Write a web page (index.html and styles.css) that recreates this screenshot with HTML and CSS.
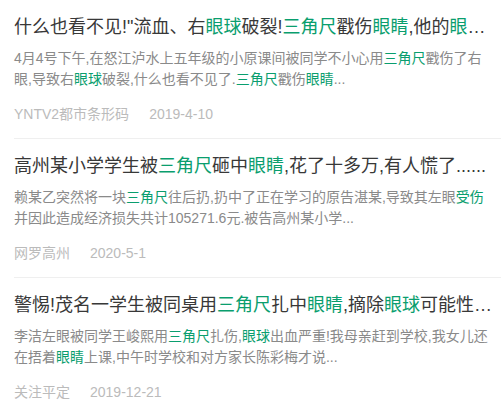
FILE: index.html
```html
<!DOCTYPE html>
<html lang="zh-CN">
<head>
<meta charset="utf-8">
<link rel="stylesheet" href="styles.css">
</head>
<body>
<ul class="list">
  <li class="item">
    <h3 class="title">什么也看不见!"流血、右<em>眼球</em>破裂!<em>三角尺</em>戳伤<em>眼睛</em>,他的<em>眼</em>…</h3>
    <p class="snippet">4月4号下午,在怒江泸水上五年级的小原课间被同学不小心用<em>三角尺</em>戳伤了右眼,导致右<em>眼球</em>破裂,什么也看不见了.<em>三角尺</em>戳伤<em>眼睛</em>...</p>
    <div class="meta"><span>YNTV2都市条形码</span><span>2019-4-10</span></div>
  </li>
  <li class="item">
    <h3 class="title">高州某小学学生被<em>三角尺</em>砸中<em>眼睛</em>,花了十多万,有人慌了......</h3>
    <p class="snippet">赖某乙突然将一块<em>三角尺</em>往后扔,扔中了正在学习的原告湛某,导致其左眼<em>受伤</em>并因此造成经济损失共计105271.6元.被告高州某小学...</p>
    <div class="meta"><span>网罗高州</span><span>2020-5-1</span></div>
  </li>
  <li class="item">
    <h3 class="title">警惕!茂名一学生被同桌用<em>三角尺</em>扎中<em>眼睛</em>,摘除<em>眼球</em>可能性…</h3>
    <p class="snippet">李洁左眼被同学王峻熙用<em>三角尺</em>扎伤,<em>眼球</em>出血严重!我母亲赶到学校,我女儿还在捂着<em>眼睛</em>上课,中午时学校和对方家长陈彩梅才说...</p>
    <div class="meta"><span>关注平定</span><span>2019-12-21</span></div>
  </li>
</ul>
</body>
</html>
```

FILE: styles.css
```css
html, body {
  margin: 0;
  padding: 0;
  background: #fff;
}
body {
  font-family: "Liberation Sans", "Noto Sans CJK SC", sans-serif;
}
.list {
  list-style: none;
  margin: 0;
  padding: 0;
}
.item {
  margin-left: 14px;
  padding: 15px 5px 14px 0;
  border-bottom: 1px solid #efefef;
}
.title {
  margin: 0;
  font-size: 18px;
  font-weight: 400;
  line-height: 24px;
  color: #383838;
  white-space: nowrap;
}
em {
  font-style: normal;
  color: #0a9e6e;
}
.snippet {
  margin: 9px 0 0;
  width: 476px;
  font-size: 14px;
  font-weight: 400;
  line-height: 21px;
  color: #8a8a8a;
}
.meta {
  margin-top: 14px;
  display: flex;
  gap: 20px;
  font-size: 14px;
  font-weight: 400;
  line-height: 20px;
  color: #bbb;
}
```
